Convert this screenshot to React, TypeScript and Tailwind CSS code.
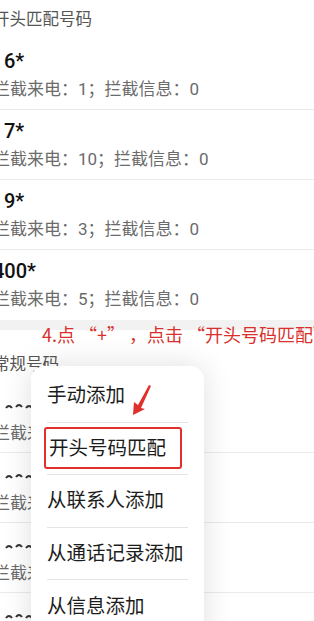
import React from "react";

const cjk = { fontFamily: 'Roboto, "Noto Sans CJK SC", sans-serif' };
const cjkFirst = { fontFamily: '"Noto Sans CJK SC", sans-serif' };

const prefixRules = [
  { title: "6*", pad: "pl-[11px]", calls: 1, msgs: 0 },
  { title: "7*", pad: "pl-[11px]", calls: 10, msgs: 0 },
  { title: "9*", pad: "pl-[11px]", calls: 3, msgs: 0 },
  { title: "400*", pad: "pl-0", calls: 5, msgs: 0 },
];

const menuItems = ["手动添加", "开头号码匹配", "从联系人添加", "从通话记录添加", "从信息添加"];

// blurred numbers in the lower list
const Scribble = () => (
  <svg width="30" height="10" viewBox="0 0 30 10" className="ml-[4px]">
    <path d="M2 6 q3 -4 6 0 M12 5 q3 -4 6 0 M22 6 q3 -4 6 0" stroke="#333" strokeWidth="2" fill="none" />
  </svg>
);

export default function App() {
  return (
    <div className="relative w-[314px] h-[621px] overflow-hidden bg-white" style={cjk}>
      {/* prefix section */}
      <div className="-ml-[7px]">
        <div className="h-[40px] flex items-center text-[16.5px] text-[#555]">开头匹配号码</div>
        {prefixRules.map((r, i) => (
          <div
            key={r.title}
            className={`h-[70px] flex flex-col pt-[7px] ${i < prefixRules.length - 1 ? "border-b border-[#ebebeb]" : ""}`}
          >
            <div className={`text-[20px] leading-[28px] font-medium text-[#111] ${r.pad}`}>{r.title}</div>
            <div className="text-[17px] leading-[28px] text-[#6b6b6b]">
              拦截来电：{r.calls}；拦截信息：{r.msgs}
            </div>
          </div>
        ))}
      </div>

      <div className="h-[10px] bg-[#f2f2f2]" />

      {/* normal numbers */}
      <div className="-ml-[7px]">
        <div className="h-[53px] flex items-end pb-[5px] text-[16.5px] text-[#555]">常规号码</div>
        {[0, 1, 2, 3].map((i) => (
          <div key={i} className="h-[70px] flex flex-col pt-[12px] border-b border-[#ebebeb]">
            <div className="h-[24px] flex items-center pl-[7px]">
              <Scribble />
            </div>
            <div className="text-[17px] leading-[28px] text-[#6b6b6b]">拦截来电：0；拦截信息：0</div>
          </div>
        ))}
      </div>

      {/* annotation */}
      <div
        className="absolute left-[42px] top-[321px] whitespace-pre text-[18px] leading-[26px] text-[#d9302b]"
        style={cjkFirst}
      >
        4.点 “+” ，点击 “开头号码匹配”
      </div>

      {/* popup menu */}
      <div className="absolute left-[31px] top-[366px] w-[173px] h-[300px] bg-white rounded-[14px] shadow-[0_0_30px_rgba(0,0,0,0.13)] px-[16px] pt-[4px]">
        {menuItems.map((m, i) => (
          <div
            key={m}
            className={`h-[52.5px] flex items-center text-[19.5px] text-[#1c1c1c] ${i < menuItems.length - 1 ? "border-b border-[#e4e4e4]" : ""}`}
          >
            {i === 1 ? (
              <span className="-ml-[3px] w-[138px] h-[42px] flex items-center pl-[3px] border-2 border-[#e0302b] rounded-[3px]">
                {m}
              </span>
            ) : (
              m
            )}
          </div>
        ))}
      </div>

      {/* red arrow */}
      <svg className="absolute left-[128px] top-[382px]" width="26" height="36" viewBox="0 0 26 36">
        <polygon points="21,3 23,4 13,26 17,27 5,33 6,20 10,23" fill="#e0302b" />
      </svg>
    </div>
  );
}
